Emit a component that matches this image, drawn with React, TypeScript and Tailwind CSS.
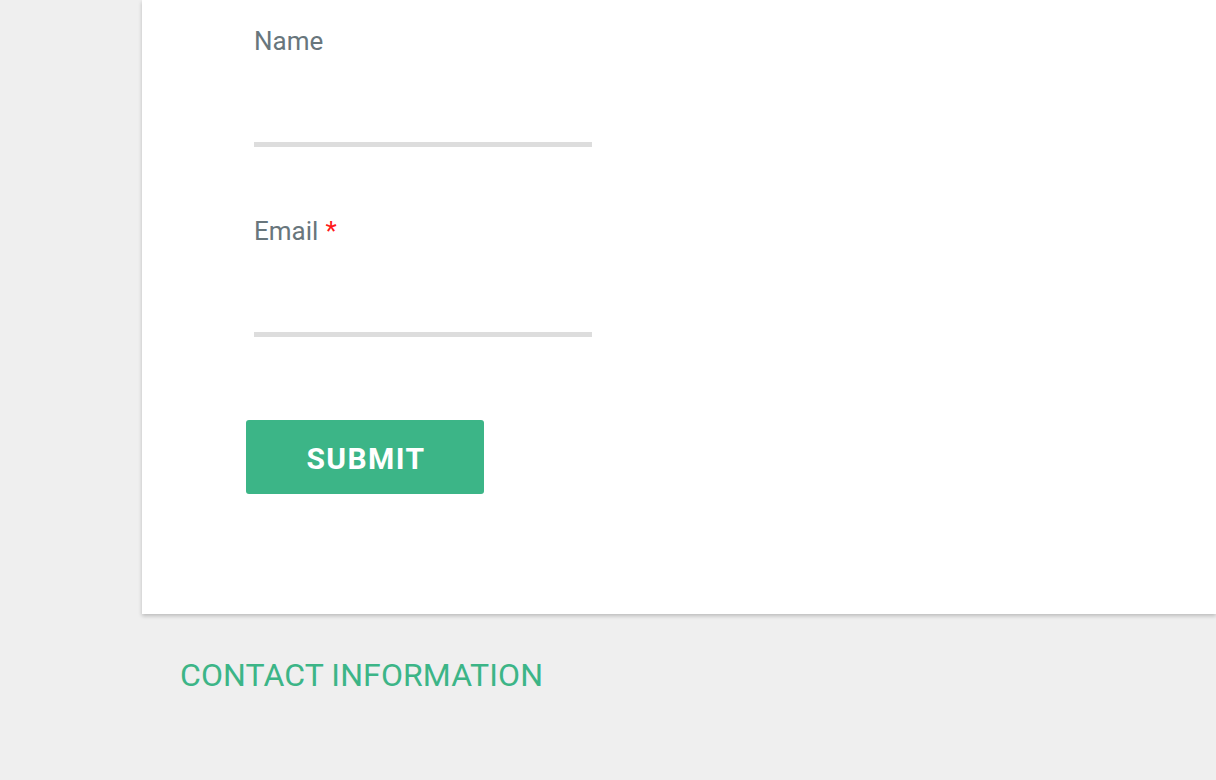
export default function App() {
  return (
    <div
      className="min-h-screen w-full overflow-hidden bg-[#efefef]"
      style={{ fontFamily: "Roboto, 'Liberation Sans', sans-serif" }}
    >
      {/* Form card */}
      <div className="ml-[142px] bg-white pl-[112px] pt-[26px] pb-[120px] shadow-[0_2px_4px_rgba(0,0,0,0.22)]">
        <label className="block text-[26px] leading-[30px] text-[#68767c]">Name</label>
        <input
          type="text"
          className="block h-[91px] w-[338px] border-b-[5px] border-[#dddddd] bg-transparent outline-none"
        />

        <label className="mt-[69px] block text-[26px] leading-[30px] text-[#68767c]">
          Email<span className="ml-[7px] text-[#ff1a1a]">*</span>
        </label>
        <input
          type="email"
          className="block h-[91px] w-[338px] border-b-[5px] border-[#dddddd] bg-transparent outline-none"
        />

        <button className="mt-[83px] -ml-[8px] flex h-[74px] w-[238px] items-center justify-center rounded-[3px] bg-[#3cb587] pt-[3px] pl-[2px] text-[30px] font-bold tracking-[1.4px] text-white">
          SUBMIT
        </button>
      </div>

      {/* Contact info heading */}
      <h2 className="ml-[180px] mt-[42px] text-[32px] leading-[38px] tracking-[0.1px] text-[#3cb587]">
        CONTACT INFORMATION
      </h2>
    </div>
  );
}
